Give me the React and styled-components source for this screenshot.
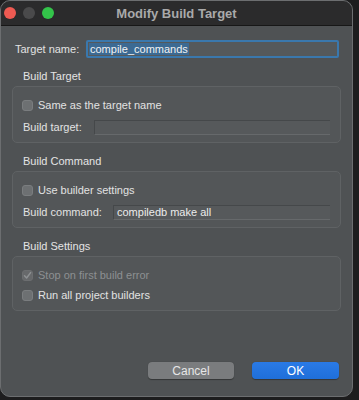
import React from "react";
import styled, { createGlobalStyle } from "styled-components";

const GlobalStyle = createGlobalStyle`
  html, body {
    margin: 0;
    padding: 0;
    background: #1d1d1e;
  }
  body {
    font-family: "Liberation Sans", Arial, sans-serif;
    -webkit-font-smoothing: antialiased;
  }
`;

const Window = styled.div`
  width: 353px;
  height: 397px;
  box-sizing: border-box;
  background: #4f5254;
  border: 1px solid #6c6e70;
  border-radius: 10px;
  overflow: hidden;
  display: flex;
  flex-direction: column;
`;

const TitleBar = styled.div`
  height: 24px;
  flex-shrink: 0;
  background: #2b2b2c;
  border-bottom: 1px solid #171717;
  display: flex;
  align-items: center;
  position: relative;
`;

const Lights = styled.div`
  display: flex;
  gap: 7px;
  padding-left: 3px;
`;

const Light = styled.span`
  width: 12px;
  height: 12px;
  border-radius: 50%;
  background: ${(p) => p.color};
`;

const Title = styled.div`
  position: absolute;
  left: 0;
  right: 0;
  text-align: center;
  font-size: 13px;
  font-weight: bold;
  color: #a9a9aa;
  pointer-events: none;
`;

const Body = styled.div`
  flex: 1;
  display: flex;
  flex-direction: column;
  padding: 14px 13px 17px 14px;
`;

const NameRow = styled.div`
  display: flex;
  align-items: center;
  height: 18px;
  font-size: 11px;
  color: #e2e2e2;
`;

const NameLabel = styled.span`
  width: 71px;
`;

const FocusInput = styled.div`
  flex: 1;
  height: 18px;
  box-sizing: border-box;
  border: 2px solid #3a78ad;
  border-radius: 2px;
  background: #55595b;
  display: flex;
  align-items: center;
  padding-left: 1px;
`;

const Selected = styled.span`
  background: #3c6a93;
  color: #f2f2f2;
  font-size: 11px;
  line-height: 12px;
  padding: 0 1px;
`;

const Section = styled.div`
  margin-top: 10px;
  margin-left: -3px;
  margin-right: -2px;
`;

const Heading = styled.div`
  height: 16px;
  line-height: 16px;
  margin-left: 11px;
  margin-bottom: 2px;
  font-size: 11px;
  color: #e4e4e4;
`;

const Group = styled.div`
  box-sizing: border-box;
  height: ${(p) => p.h}px;
  border: 1px solid #5f6264;
  border-radius: 5px;
  background: #535658;
  padding: 10px 10px 0 9px;
  display: flex;
  flex-direction: column;
  gap: ${(p) => p.gap}px;
`;

const CheckRow = styled.label`
  display: flex;
  align-items: center;
  height: 16px;
  gap: 5px;
  font-size: 11px;
  color: ${(p) => (p.disabled ? "#8d9092" : "#e2e2e2")};
`;

const Box = styled.span`
  width: 11px;
  height: 11px;
  box-sizing: border-box;
  border-radius: 3px;
  background: ${(p) => (p.disabled ? "#67696b" : "#6d7072")};
  border: 1px solid ${(p) => (p.disabled ? "#6c6e70" : "#7a7d7f")};
  display: flex;
  align-items: center;
  justify-content: center;
`;

const FieldRow = styled.div`
  display: flex;
  align-items: center;
  height: 16px;
  font-size: 11px;
  color: #e2e2e2;
`;

const FieldLabel = styled.span`
  width: ${(p) => p.w}px;
  padding-left: 1px;
  flex-shrink: 0;
`;

const Field = styled.div`
  flex: 1;
  height: 15px;
  box-sizing: border-box;
  background: #56595b;
  border-top: 1px solid #45484a;
  border-left: 1px solid #45484a;
  border-bottom: 1px solid #66696b;
  display: flex;
  align-items: center;
  padding-left: 3px;
  font-size: 11px;
  color: #ececec;
`;

const Buttons = styled.div`
  margin-top: auto;
  display: flex;
  justify-content: flex-end;
  gap: 18px;
`;

const Button = styled.button`
  width: ${(p) => p.w}px;
  height: 17px;
  border: none;
  border-radius: 4px;
  font-family: inherit;
  font-size: 12px;
  padding: 0;
  color: ${(p) => (p.primary ? "#ffffff" : "#e6e6e6")};
  background: ${(p) => (p.primary ? "linear-gradient(#2a7ae6, #1f6fd9)" : "#7a7c7e")};
  box-shadow: 0 0.5px 1px rgba(0, 0, 0, 0.35);
`;

const Check = () => (
  <svg width="9" height="9" viewBox="0 0 9 9">
    <path d="M1.5 4.8 L3.6 7 L7.6 1.6" fill="none" stroke="#8e9193" strokeWidth="1.5" strokeLinecap="round" strokeLinejoin="round" />
  </svg>
);

export default function App() {
  return (
    <>
      <GlobalStyle />
      <Window>
        <TitleBar>
          <Lights>
            <Light color="#ee5a52" />
            <Light color="#4a4a4b" />
            <Light color="#33c44a" />
          </Lights>
          <Title>Modify Build Target</Title>
        </TitleBar>
        <Body>
          <NameRow>
            <NameLabel>Target name:</NameLabel>
            <FocusInput>
              <Selected>compile_commands</Selected>
            </FocusInput>
          </NameRow>

          <Section>
            <Heading>Build Target</Heading>
            <Group h={57} gap={6}>
              <CheckRow>
                <Box />
                Same as the target name
              </CheckRow>
              <FieldRow>
                <FieldLabel w={71}>Build target:</FieldLabel>
                <Field />
              </FieldRow>
            </Group>
          </Section>

          <Section>
            <Heading>Build Command</Heading>
            <Group h={57} gap={6}>
              <CheckRow>
                <Box />
                Use builder settings
              </CheckRow>
              <FieldRow>
                <FieldLabel w={90}>Build command:</FieldLabel>
                <Field>compiledb make all</Field>
              </FieldRow>
            </Group>
          </Section>

          <Section>
            <Heading>Build Settings</Heading>
            <Group h={55} gap={4}>
              <CheckRow disabled>
                <Box disabled>
                  <Check />
                </Box>
                Stop on first build error
              </CheckRow>
              <CheckRow>
                <Box />
                Run all project builders
              </CheckRow>
            </Group>
          </Section>

          <Buttons>
            <Button w={86}>Cancel</Button>
            <Button w={87} primary>
              OK
            </Button>
          </Buttons>
        </Body>
      </Window>
    </>
  );
}
